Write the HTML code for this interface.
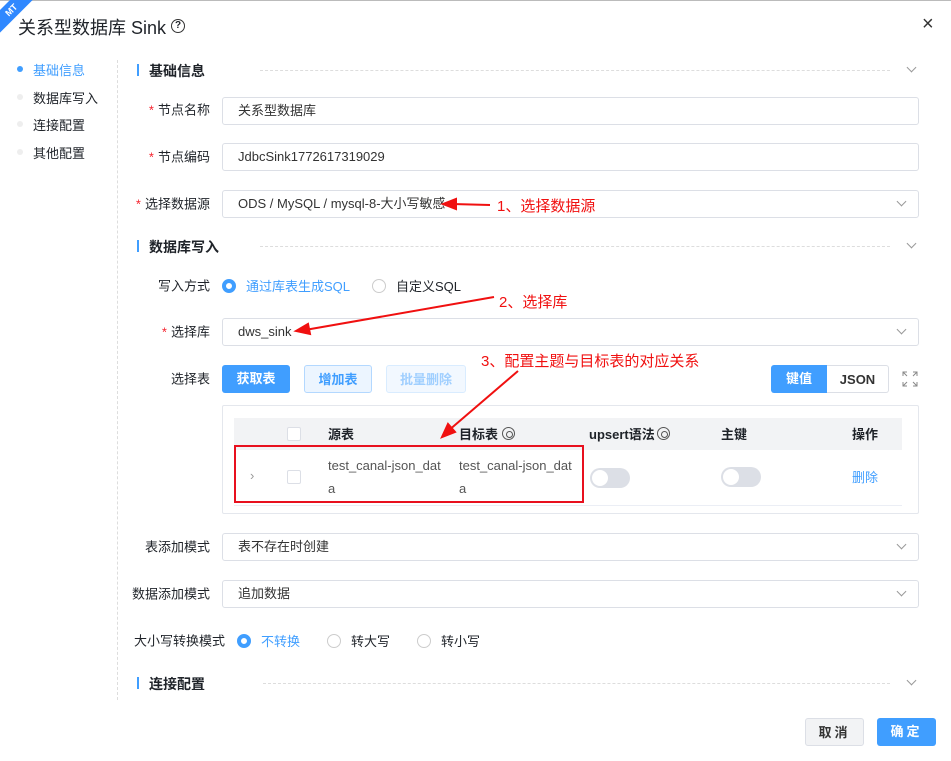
<!DOCTYPE html>
<html><head><meta charset="utf-8"><style>
*{box-sizing:border-box;margin:0;padding:0}
body{width:951px;height:761px;background:#fff;position:relative;overflow:hidden;font-family:"Liberation Sans","Noto Sans CJK SC",sans-serif;font-size:13px;color:#1f2329}
.a{position:absolute}
.lbl{position:absolute;right:741px;font-size:13px;color:#1f2329;white-space:nowrap;transform:translateY(-50%)}
.lbl b{color:#f5222d;font-weight:normal;margin-right:4px}
.inp{position:absolute;left:222px;width:697px;height:28px;border:1px solid #dcdfe6;border-radius:3px;padding-left:15px;line-height:26px;color:#333;font-size:13px}
.chev{position:absolute;width:7px;height:7px;border-right:1px solid #999;border-bottom:1px solid #999;transform:rotate(45deg)}
.sec{position:absolute;left:137px;font-size:14px;font-weight:bold;color:#1f2329}
.sec:before{content:"";position:absolute;left:0;top:3px;width:2px;height:12px;background:#409eff}
.sec span{margin-left:12px}
.dl{position:absolute;height:0;border-top:1px dashed #ddd}
.radio{position:absolute;width:14px;height:14px;border-radius:50%;border:1px solid #ccc;background:#fff}
.radio.on{border:4px solid #409eff}
.red{color:#f01010;font-size:15px;position:absolute;white-space:nowrap}
.btn{position:absolute;height:28px;border-radius:3px;text-align:center;line-height:28px;font-size:13px}
.tog{position:absolute;width:40px;height:20px;border-radius:10px;background:#dcdfe6}
.tog:after{content:"";position:absolute;left:2px;top:2px;width:16px;height:16px;border-radius:50%;background:#fff}
.cb{position:absolute;width:14px;height:14px;border:1px solid #dcdfe6;border-radius:2px;background:#fff}
.hx{position:absolute;width:13px;height:13px;border:1.5px solid #555;border-radius:50%}
.hx:after{content:"";position:absolute;left:2.5px;top:2.5px;width:5px;height:5px;border:1.2px solid #555;border-radius:50%}
</style></head><body>
<div class="a" style="left:0;top:0;width:951px;height:1px;background:#bbb"></div>
<div class="a" style="left:-12px;top:22px;width:50px;height:16px;background:#2f88ff;transform:rotate(-45deg);transform-origin:0 0;color:#fff;font-size:9px;font-weight:bold;text-align:center;line-height:16px">MT</div>
<div class="a" style="left:18px;top:14px;font-size:18px;color:#1f2329">关系型数据库 Sink</div>
<div class="a" style="left:171px;top:19px;width:14px;height:14px;border:1.5px solid #333;border-radius:50%;font-size:10px;text-align:center;line-height:11px;font-weight:bold">?</div>
<div class="a" style="left:922px;top:14px;font-size:20px;color:#333;line-height:20px">×</div>

<div class="a" style="left:17px;top:66px;width:6px;height:6px;border-radius:50%;background:#409eff"></div>
<div class="a" style="left:33px;top:60px;color:#409eff">基础信息</div>
<div class="a" style="left:17px;top:94px;width:6px;height:6px;border-radius:50%;background:#eee"></div>
<div class="a" style="left:33px;top:88px">数据库写入</div>
<div class="a" style="left:17px;top:121px;width:6px;height:6px;border-radius:50%;background:#eee"></div>
<div class="a" style="left:33px;top:115px">连接配置</div>
<div class="a" style="left:17px;top:149px;width:6px;height:6px;border-radius:50%;background:#eee"></div>
<div class="a" style="left:33px;top:143px">其他配置</div>
<div class="a" style="left:117px;top:60px;height:640px;border-left:1px dashed #ddd"></div>

<div class="sec" style="top:61px"><span>基础信息</span></div>
<div class="dl" style="left:260px;top:70px;width:630px"></div>
<div class="chev" style="left:908px;top:64px"></div>
<div class="lbl" style="top:109px"><b>*</b>节点名称</div>
<div class="inp" style="top:97px">关系型数据库</div>
<div class="lbl" style="top:156px"><b>*</b>节点编码</div>
<div class="inp" style="top:143px">JdbcSink1772617319029</div>
<div class="lbl" style="top:203px"><b>*</b>选择数据源</div>
<div class="inp" style="top:190px">ODS / MySQL / mysql-8-大小写敏感</div>
<div class="chev" style="left:898px;top:198px"></div>
<div class="red" style="left:497px;top:195px">1、选择数据源</div>

<div class="sec" style="top:237px"><span>数据库写入</span></div>
<div class="dl" style="left:260px;top:246px;width:630px"></div>
<div class="chev" style="left:908px;top:240px"></div>
<div class="lbl" style="top:285px">写入方式</div>
<div class="radio on" style="left:222px;top:279px"></div>
<div class="a" style="left:246px;top:276px;color:#409eff">通过库表生成SQL</div>
<div class="radio" style="left:372px;top:279px"></div>
<div class="a" style="left:396px;top:276px">自定义SQL</div>
<div class="red" style="left:499px;top:291px">2、选择库</div>
<div class="lbl" style="top:331px"><b>*</b>选择库</div>
<div class="inp" style="top:318px">dws_sink</div>
<div class="chev" style="left:898px;top:326px"></div>
<div class="red" style="left:481px;top:350px">3、配置主题与目标表的对应关系</div>

<div class="lbl" style="top:378px">选择表</div>
<div class="btn" style="left:222px;top:365px;width:68px;background:#409eff;color:#fff;font-weight:bold">获取表</div>
<div class="btn" style="left:304px;top:365px;width:68px;background:#ecf5ff;border:1px solid #b3d8ff;color:#409eff;font-weight:bold">增加表</div>
<div class="btn" style="left:386px;top:365px;width:80px;background:#f2f8ff;border:1px solid #d9ecff;color:#a0cfff;font-weight:bold">批量删除</div>
<div class="btn" style="left:771px;top:365px;width:56px;background:#409eff;color:#fff;border-radius:3px 0 0 3px;font-weight:bold">键值</div>
<div class="btn" style="left:827px;top:365px;width:62px;border:1px solid #dcdfe6;border-left:0;border-radius:0 3px 3px 0;color:#333;font-weight:bold">JSON</div>
<svg class="a" style="left:902px;top:371px" width="16" height="16" fill="none" stroke="#888" stroke-width="1"><path d="M1 5V1h4M1 1l4 4M15 5V1h-4M15 1l-4 4M1 11v4h4M1 15l4-4M15 11v4h-4M15 15l-4-4"/></svg>

<div class="a" style="left:222px;top:405px;width:697px;height:109px;border:1px solid #e4e7ed;border-radius:2px"></div>
<div class="a" style="left:234px;top:418px;width:668px;height:32px;background:#f2f3f5"></div>
<div class="a" style="left:234px;top:505px;width:668px;height:1px;background:#ebeef5"></div>
<div class="cb" style="left:287px;top:427px"></div>
<div class="a" style="left:328px;top:424px;font-weight:bold">源表</div>
<div class="a" style="left:459px;top:424px;font-weight:bold">目标表</div>
<div class="hx" style="left:502px;top:427px"></div>
<div class="a" style="left:589px;top:424px;font-weight:bold">upsert语法</div>
<div class="hx" style="left:657px;top:427px"></div>
<div class="a" style="left:721px;top:424px;font-weight:bold">主键</div>
<div class="a" style="left:852px;top:424px;font-weight:bold">操作</div>
<div class="a" style="left:250px;top:468px;color:#999">›</div>
<div class="cb" style="left:287px;top:470px"></div>
<div class="a" style="left:328px;top:454px;line-height:23px;color:#555">test_canal-json_dat<br>a</div>
<div class="a" style="left:459px;top:454px;line-height:23px;color:#555">test_canal-json_dat<br>a</div>
<div class="tog" style="left:590px;top:468px"></div>
<div class="tog" style="left:721px;top:467px"></div>
<div class="a" style="left:852px;top:467px;color:#409eff">删除</div>
<div class="a" style="left:234px;top:445px;width:350px;height:58px;border:2px solid #e8101e"></div>

<svg class="a" style="left:0;top:0" width="951" height="761">
<g stroke="#f01010" stroke-width="2" fill="#f01010">
<line x1="490" y1="205" x2="452" y2="204"/><polygon points="443,204 456,199 456,209"/>
<line x1="494" y1="297" x2="305" y2="330"/><polygon points="296,331 308,324 310,334"/>
<line x1="518" y1="371" x2="448" y2="431"/><polygon points="442,437 448,424 455,432"/>
</g></svg>

<div class="lbl" style="top:546px">表添加模式</div>
<div class="inp" style="top:533px">表不存在时创建</div>
<div class="chev" style="left:898px;top:541px"></div>
<div class="lbl" style="top:593px">数据添加模式</div>
<div class="inp" style="top:580px">追加数据</div>
<div class="chev" style="left:898px;top:588px"></div>
<div class="lbl" style="top:640px;right:726px">大小写转换模式</div>
<div class="radio on" style="left:237px;top:634px"></div>
<div class="a" style="left:261px;top:631px;color:#409eff">不转换</div>
<div class="radio" style="left:327px;top:634px"></div>
<div class="a" style="left:351px;top:631px">转大写</div>
<div class="radio" style="left:417px;top:634px"></div>
<div class="a" style="left:441px;top:631px">转小写</div>

<div class="sec" style="top:674px"><span>连接配置</span></div>
<div class="dl" style="left:263px;top:683px;width:627px"></div>
<div class="chev" style="left:908px;top:677px"></div>

<div class="btn" style="left:805px;top:718px;width:59px;background:#f2f3f5;border:1px solid #dcdfe6;color:#333;font-weight:bold;letter-spacing:3px">取消</div>
<div class="btn" style="left:877px;top:718px;width:59px;background:#409eff;color:#fff;font-weight:bold;letter-spacing:3px">确定</div>
</body></html>
